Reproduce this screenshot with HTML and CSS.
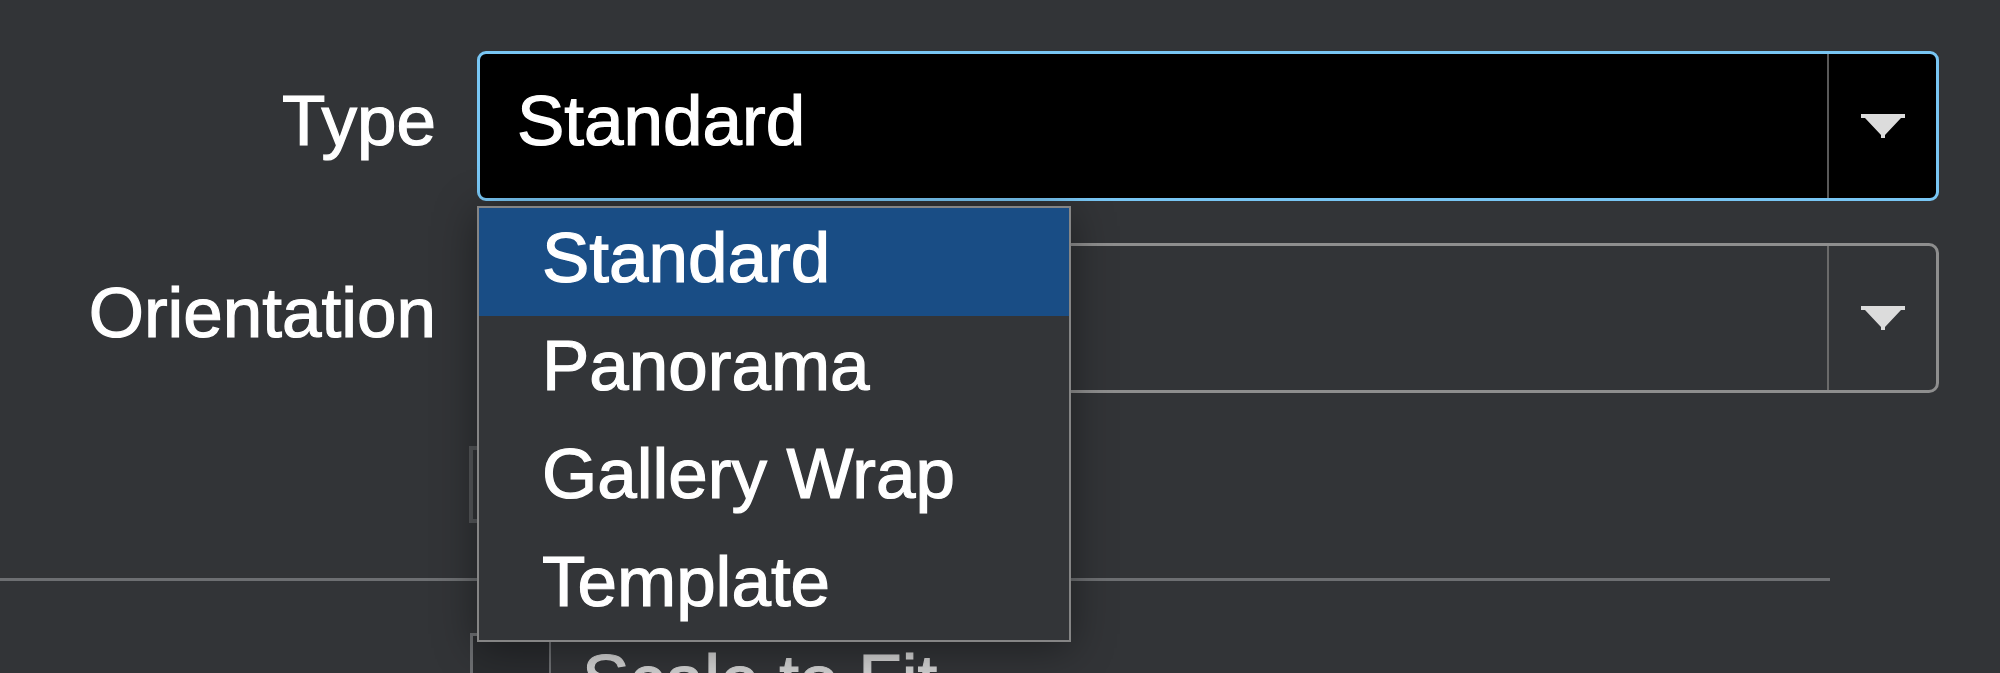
FILE: index.html
```html
<!DOCTYPE html>
<html lang="en">
<head>
  <meta charset="UTF-8">
  <meta name="viewport" content="width=device-width, initial-scale=1.0">
  <title>Print Type</title>
  <link rel="stylesheet" href="styles.css">
</head>
<body>
  <div class="panel">

    <div class="field">
      <label class="field-label">Type</label>
      <div class="select is-open">
        <span class="select-value">Standard</span>
        <span class="select-btn">
          <svg width="44" height="24" viewBox="0 0 44 24"><polygon points="0,0 44,0 44,4 40,4 24,21 24,24 20,24 20,21 4,4 0,4" fill="#dcdcdc"/></svg>
        </span>

        <!-- open list of the Type select -->
        <ul class="menu">
          <li class="menu-item is-active">Standard</li>
          <li class="menu-item">Panorama</li>
          <li class="menu-item">Gallery Wrap</li>
          <li class="menu-item">Template</li>
        </ul>
      </div>
    </div>

    <div class="field field-gap">
      <label class="field-label">Orientation</label>
      <div class="select">
        <span class="select-value"></span>
        <span class="select-btn">
          <svg width="44" height="24" viewBox="0 0 44 24"><polygon points="0,0 44,0 44,4 40,4 24,21 24,24 20,24 20,21 4,4 0,4" fill="#dcdcdc"/></svg>
        </span>
      </div>
    </div>

    <div class="field field-check">
      <span></span>
      <div class="check-box"></div>
    </div>

    <div class="rule"></div>

    <div class="field field-fit">
      <span></span>
      <div class="fit-box">
        <span class="fit-cell"></span>
        <span class="fit-label">Scale to Fit</span>
      </div>
    </div>

  </div>
</body>
</html>
```

FILE: styles.css
```css
html, body {
    margin: 0;
    height: 673px;
    overflow: hidden;
    background-color: #323437;
}

body {
    font-family: 'Liberation Sans', Arial, sans-serif;
    font-size: 71px;
    color: #fff;
    -webkit-text-stroke: 1.2px #fff;
}

.panel {
    padding: 51px 61px 0 0;
}

.field {
    display: grid;
    grid-template-columns: 436px 1fr;
    column-gap: 41px;
    align-items: center;
}

.field-gap {
    margin-top: 42px;
}

.field-label {
    text-align: right;
    line-height: 1;
    margin-bottom: 12px;
}

.select {
    position: relative;
    display: flex;
    height: 150px;
    box-sizing: border-box;
    border: 3px solid #8e8e8e;
    border-radius: 10px;
}

.select.is-open {
    border-color: #78c6f4;
    background-color: #000;
    border-radius: 9px;
}

.select-value {
    flex: 1;
    align-self: center;
    padding-left: 37px;
    line-height: 1;
    margin-bottom: 12px;
}

.select-btn {
    width: 107px;
    border-left: 2px solid #6a6a6a;
    display: flex;
    align-items: center;
    justify-content: center;
}

.is-open .select-btn {
    border-left-color: #595959;
}

.menu {
    position: absolute;
    z-index: 2;
    top: calc(100% + 8px);
    left: -3px;
    width: 594px;
    box-sizing: border-box;
    margin: 0;
    padding: 0;
    list-style: none;
    border: 2px solid #858585;
    background-color: #333538;
    box-shadow: 0 6px 40px rgba(0, 0, 0, 0.4);
}

.menu-item {
    height: 108px;
    box-sizing: border-box;
    line-height: 100px;
    padding: 0 0 8px 63px;
}

.menu-item.is-active {
    background-color: #194d85;
}

.field-check {
    margin-top: 53px;
}

.check-box {
    width: 120px;
    height: 77px;
    margin-left: -8px;
    box-sizing: border-box;
    border: 4px solid #55575a;
}

.rule {
    width: 1830px;
    height: 3px;
    margin-top: 55px;
    background-color: #6d6f72;
}

.field-fit {
    margin-top: 52px;
    align-items: start;
}

.fit-box {
    display: flex;
    width: 580px;
    height: 110px;
    margin-left: -7px;
    box-sizing: border-box;
    border: 3px solid #6d6f72;
    border-right: none;
}

.fit-cell {
    width: 76px;
    background-color: #2a2c2f;
    border-right: 2px solid #6d6f72;
}

.fit-label {
    padding: 8px 0 0 31px;
    line-height: 1;
    color: #d0d0d0;
    -webkit-text-stroke: 1.2px #d0d0d0;
}
```
